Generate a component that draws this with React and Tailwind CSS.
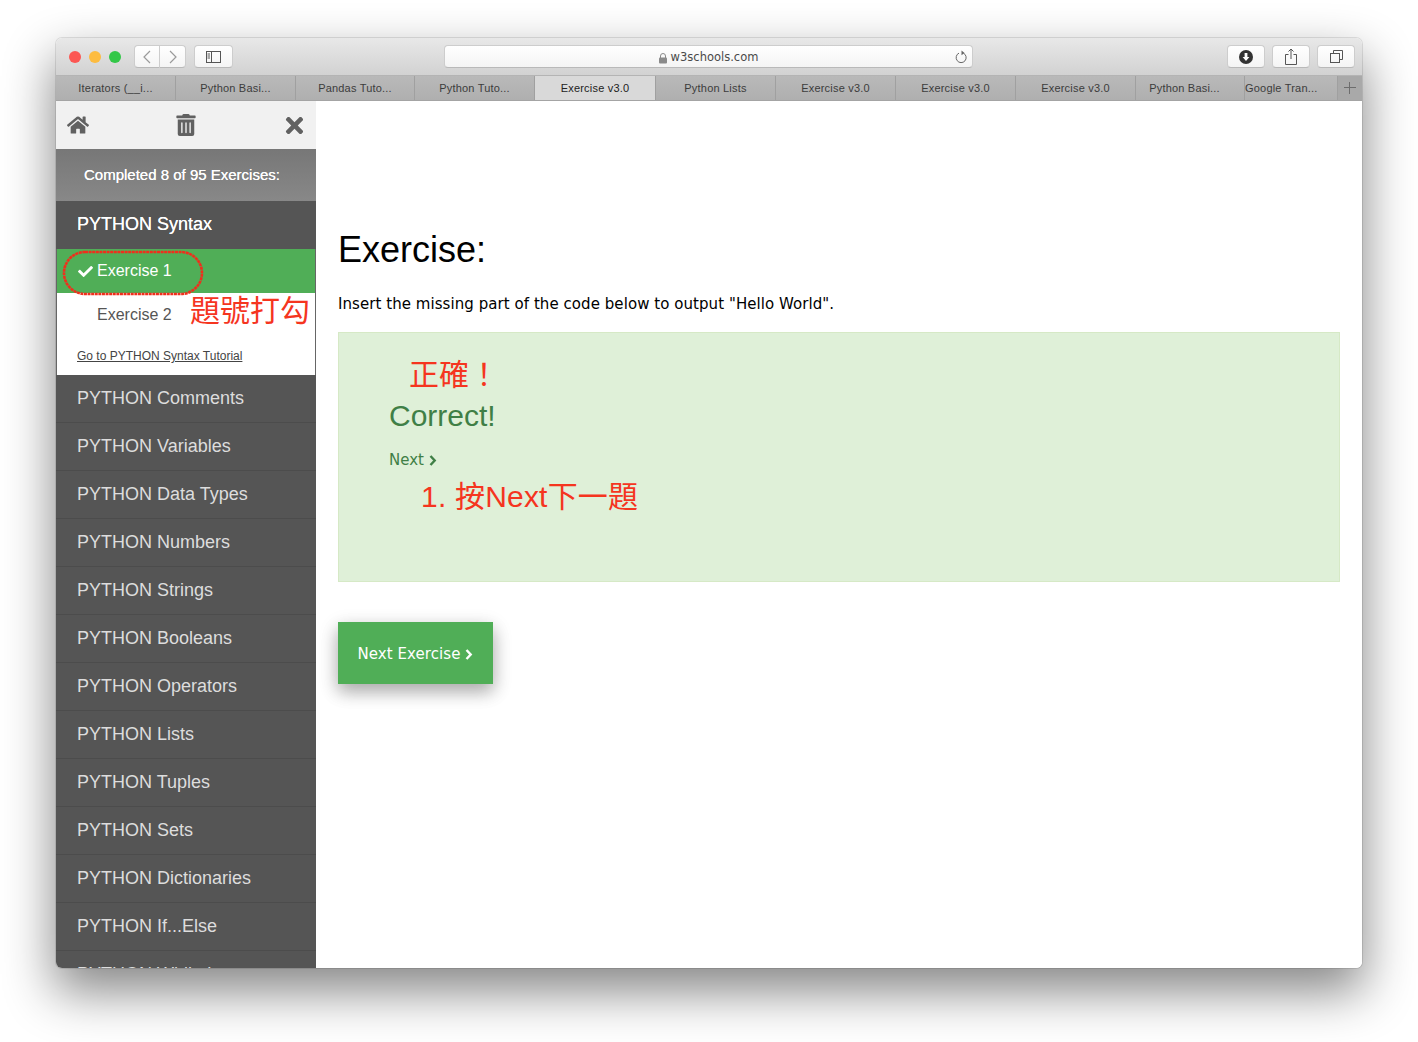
import React from 'react';
import { FaHome, FaTrashAlt, FaTimes, FaCheck } from 'react-icons/fa';

const tabs = [
  { label: 'Iterators (__i...', width: 'w-[120px]' },
  { label: 'Python Basi...', width: 'w-[120px]' },
  { label: 'Pandas Tuto...', width: 'w-[119px]' },
  { label: 'Python Tuto...', width: 'w-[120px]' },
  { label: 'Exercise v3.0', width: 'w-[121px]', active: true },
  { label: 'Python Lists', width: 'w-[120px]' },
  { label: 'Exercise v3.0', width: 'w-[120px]' },
  { label: 'Exercise v3.0', width: 'w-[120px]' },
  { label: 'Exercise v3.0', width: 'w-[120px]' },
  { label: 'Python Basi...', width: 'w-[109px] pr-[11px]' },
  { label: 'Google Tran...', width: 'w-[93px]', left: true },
];

const topics = [
  'Comments', 'Variables', 'Data Types', 'Numbers', 'Strings', 'Booleans', 'Operators',
  'Lists', 'Tuples', 'Sets', 'Dictionaries', 'If...Else', 'While Loops',
];

const redNote = "absolute text-[#f5351f] font-['Liberation_Sans','Noto_Sans_CJK_TC',sans-serif] leading-none whitespace-nowrap";

function ToolButton({ className, children }) {
  return (
    <div className={`h-[23px] bg-gradient-to-b from-white to-[#f4f4f4] rounded-[4px] border border-[#cdcdcd] border-b-[#b9b9b9] flex items-center justify-center ${className}`}>
      {children}
    </div>
  );
}

function Chevron({ w = 8, h = 11 }) {
  return (
    <svg width={w} height={h} viewBox="0 0 8 11" fill="none" stroke="currentColor" strokeWidth="2.400"><path d="m1.500 1 4.200 4.500-4.200 4.500" /></svg>
  );
}

function Toolbar() {
  return (
    <div className="h-[38px] flex items-center bg-gradient-to-b from-[#e8e8e8] to-[#d2d2d2] border-b border-[#b4b4b4] relative">
      <div className="flex items-center gap-[8px] ml-[13px]">
        <div className="w-3 h-3 rounded-full bg-[#fc5753]"></div>
        <div className="w-3 h-3 rounded-full bg-[#fdbc40]"></div>
        <div className="w-3 h-3 rounded-full bg-[#33c748]"></div>
      </div>
      <div className="flex ml-[13px]">
        <ToolButton className="w-[26px] rounded-r-none">
          <svg width="10" height="14" viewBox="0 0 10 14" fill="none" stroke="#9a9a9a" strokeWidth="1.2"><path d="M8 1 2 7l6 6" /></svg>
        </ToolButton>
        <ToolButton className="w-[26px] rounded-l-none border-l-0">
          <svg width="10" height="14" viewBox="0 0 10 14" fill="none" stroke="#9a9a9a" strokeWidth="1.2"><path d="m2 1 6 6-6 6" /></svg>
        </ToolButton>
      </div>
      <ToolButton className="w-[39px] ml-[8px]">
        <svg width="15" height="12" viewBox="0 0 15 12" fill="none" stroke="#555" strokeWidth="1"><rect x="0.5" y="0.5" width="14" height="11" /><path d="M5.5 0.5v11M1.5 3h2.5M1.5 5h2.5M1.5 7h2.5" /></svg>
      </ToolButton>
      <ToolButton className="w-[529px] ml-[211px] pt-[3px] relative text-[11.5px] text-[#4a4a4a] font-['DejaVu_Sans',sans-serif]">
        <svg className="mr-[4px]" width="8" height="11" viewBox="0 0 8 11" fill="#8a8a8a"><rect x="0" y="4.5" width="8" height="6" rx="1" /><path d="M1.5 5V3a2.5 2.5 0 0 1 5 0v2" fill="none" stroke="#8a8a8a" /></svg>
        w3schools.com
        <svg className="absolute right-[4px] top-[4px]" width="13" height="14" viewBox="0 0 13 14" fill="none" stroke="#666" strokeWidth="1"><path d="M8.5 3.2A5 5 0 1 1 4 3.1" /><path d="M6.5 0.5 9.5 3 6.5 5.2Z" fill="#666" stroke="none" /></svg>
      </ToolButton>
      <ToolButton className="w-[38px] ml-[254px]">
        <svg width="14" height="14" viewBox="0 0 14 14"><circle cx="7" cy="7" r="7" fill="#333" /><path d="M5.6 3h2.8v4h2L7 11 3.600 7h2Z" fill="#fff" /></svg>
      </ToolButton>
      <ToolButton className="w-[38px] ml-[7px]">
        <svg width="12" height="17" viewBox="0 0 12 17" fill="none" stroke="#555" strokeWidth="1"><path d="M3.500 6.500H0.500v10h11v-10h-3M6 11V1M3.500 3.500 6 1l2.500 2.500" /></svg>
      </ToolButton>
      <ToolButton className="w-[38px] ml-[7px]">
        <svg width="13" height="13" viewBox="0 0 13 13" fill="none" stroke="#555" strokeWidth="1"><rect x="0.500" y="3.500" width="9" height="9" /><path d="M3.500 3.500v-3h9v9h-3" /></svg>
      </ToolButton>
    </div>
  );
}

function TabBar() {
  return (
    <div className="h-[25px] flex bg-gradient-to-b from-[#b9b9b9] to-[#afafaf] border-b border-[#a4a4a4] font-['Liberation_Sans',sans-serif] text-[11px] tracking-[0.2px] text-[#3c3c3c]">
      {tabs.map((tab, i) => (
        <div
          key={i}
          className={`${tab.width} shrink-0 flex items-center border-r border-[#a0a0a0] ${tab.left ? 'justify-start' : 'justify-center'} ${tab.active ? 'bg-[#d9d9d9] text-[#222]' : ''}`}
        >
          {tab.label}
        </div>
      ))}
      <div className="flex-1 bg-[#a9a9a9] flex items-center justify-center">
        <svg width="12" height="12" viewBox="0 0 12 12" stroke="#6d6d6d" strokeWidth="1"><path d="M5.500 0v12M0 5.500h12" /></svg>
      </div>
    </div>
  );
}

function Sidebar() {
  return (
    <aside className="w-[260px] shrink-0 h-full overflow-hidden bg-[#555] relative font-['Liberation_Sans',sans-serif]">
      <div className="h-[48px] bg-[#f1f1f1] flex items-center justify-between pl-[11px] pr-[9px] text-[#616161]">
        <FaHome size={22} />
        <FaTrashAlt size={22} />
        <FaTimes size={25} />
      </div>
      <div className="h-[52px] bg-gradient-to-b from-[#777] to-[#888] flex items-center pl-[28px] text-white text-[15px] [text-shadow:0_0_0.4px_#fff]">
        Completed 8 of 95 Exercises:
      </div>
      <div className="h-[48px] bg-[#555] flex items-center pl-[21px] pb-[1px] text-white text-[18px] [text-shadow:0_0_0.4px_#fff]">
        PYTHON Syntax
      </div>
      <div className="bg-white border-x border-[#666]">
        <div className="h-[44px] bg-[#50ae57] flex items-center pl-[21px] text-white text-[16px] gap-[4px]">
          <FaCheck size={15} />
          Exercise 1
        </div>
        <div className="h-[44px] flex items-center pl-[40px] text-[#555] text-[16px]">Exercise 2</div>
        <div className="h-[38px] pl-[20px] pt-[10px] text-[12px] text-[#444] underline">Go to PYTHON Syntax Tutorial</div>
      </div>
      {topics.map((topic) => (
        <div key={topic} className="h-[48px] flex items-center pl-[21px] text-[#ddd] text-[18px] border-b border-[#4c4c4c]">
          PYTHON {topic}
        </div>
      ))}
    </aside>
  );
}

function Main() {
  return (
    <main className="flex-1 bg-white pl-[22px] pr-[22px] pt-[129px] font-['DejaVu_Sans',sans-serif] text-black">
      <h1 className="text-[36px] leading-[40px] h-[40px] font-['Liberation_Sans',sans-serif]">Exercise:</h1>
      <p className="text-[15px] leading-[22px] mt-[23px] tracking-[0.06px] whitespace-nowrap">Insert the missing part of the code below to output "Hello World".</p>
      <div className="mt-[17px] h-[250px] bg-[#dff0d8] border border-[#d6e9c6] pl-[50px] pt-[50px] text-[#3f7f46]">
        <div className="text-[30px] leading-[64px] h-[64px] mt-[1px] font-['Liberation_Sans',sans-serif]">Correct!</div>
        <div className="mt-[1px] text-[15px] leading-[22px] flex items-center gap-[5px]">
          Next <Chevron />
        </div>
      </div>
      <div className="mt-[40px] w-[155px] h-[62px] pt-[2px] bg-[#50ae57] text-white text-[15px] tracking-[0.06px] flex items-center justify-center gap-[5px] shadow-[0_8px_16px_0_rgba(0,0,0,0.2),0_6px_20px_0_rgba(0,0,0,0.19)]">
        Next Exercise <Chevron />
      </div>
    </main>
  );
}

export default function App() {
  return (
    <div className="w-[1418px] h-[1042px] bg-white overflow-hidden pt-[38px] pl-[56px]">
      <div className="w-[1306px] h-[930px] relative rounded-[6px] flex flex-col overflow-hidden shadow-[0_0_0_1px_rgba(0,0,0,0.1),0_22px_50px_2px_rgba(0,0,0,0.47)]">
        <Toolbar />
        <TabBar />
        <div className="flex-1 min-h-0 flex">
          <Sidebar />
          <Main />
        </div>

        {/* red annotations drawn over the screenshot */}
        <svg className="absolute left-[6px] top-[212px]" width="142" height="46" viewBox="0 0 142 46" fill="none">
          <rect x="2" y="2" width="138" height="42" rx="21" stroke="#ef2f1c" strokeWidth="2.600" strokeDasharray="3 0.600" />
        </svg>
        <div className={`${redNote} left-[134px] top-[258px] text-[30px]`}>題號打勾</div>
        <div className={`${redNote} left-[353px] top-[322px] text-[30px]`}>正確！</div>
        <div className={`${redNote} left-[365px] top-[444px] text-[30px] tracking-[0.2px]`}>1. 按Next下一題</div>
      </div>
    </div>
  );
}
